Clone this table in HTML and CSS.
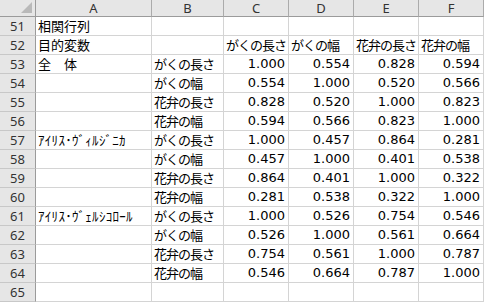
FILE: index.html
```html
<!DOCTYPE html>
<html lang="ja">
<head>
<meta charset="utf-8">
<link rel="stylesheet" href="styles.css">
</head>
<body>
<div class="sheet">
  <div class="corner"><span class="tri"></span></div>
  <div class="ch">A</div><div class="ch">B</div><div class="ch">C</div><div class="ch">D</div><div class="ch">E</div><div class="ch">F</div>

  <div class="rh">51</div><div class="c t">相関行列</div><div class="c"></div><div class="c"></div><div class="c"></div><div class="c"></div><div class="c"></div>
  <div class="rh">52</div><div class="c t">目的変数</div><div class="c"></div><div class="c t k">がくの長さ</div><div class="c t k">がくの幅</div><div class="c t k">花弁の長さ</div><div class="c t k">花弁の幅</div>

  <div class="rh">53</div><div class="c t">全　体</div><div class="c t k">がくの長さ</div><div class="c n">1.000</div><div class="c n">0.554</div><div class="c n">0.828</div><div class="c n">0.594</div>
  <div class="rh">54</div><div class="c"></div><div class="c t k">がくの幅</div><div class="c n">0.554</div><div class="c n">1.000</div><div class="c n">0.520</div><div class="c n">0.566</div>
  <div class="rh">55</div><div class="c"></div><div class="c t k">花弁の長さ</div><div class="c n">0.828</div><div class="c n">0.520</div><div class="c n">1.000</div><div class="c n">0.823</div>
  <div class="rh">56</div><div class="c"></div><div class="c t k">花弁の幅</div><div class="c n">0.594</div><div class="c n">0.566</div><div class="c n">0.823</div><div class="c n">1.000</div>

  <div class="rh">57</div><div class="c t h">ｱｲﾘｽ･ｳﾞｨﾙｼﾞﾆｶ</div><div class="c t k">がくの長さ</div><div class="c n">1.000</div><div class="c n">0.457</div><div class="c n">0.864</div><div class="c n">0.281</div>
  <div class="rh">58</div><div class="c"></div><div class="c t k">がくの幅</div><div class="c n">0.457</div><div class="c n">1.000</div><div class="c n">0.401</div><div class="c n">0.538</div>
  <div class="rh">59</div><div class="c"></div><div class="c t k">花弁の長さ</div><div class="c n">0.864</div><div class="c n">0.401</div><div class="c n">1.000</div><div class="c n">0.322</div>
  <div class="rh">60</div><div class="c"></div><div class="c t k">花弁の幅</div><div class="c n">0.281</div><div class="c n">0.538</div><div class="c n">0.322</div><div class="c n">1.000</div>

  <div class="rh">61</div><div class="c t h">ｱｲﾘｽ･ｳﾞｪﾙｼｺﾛｰﾙ</div><div class="c t k">がくの長さ</div><div class="c n">1.000</div><div class="c n">0.526</div><div class="c n">0.754</div><div class="c n">0.546</div>
  <div class="rh">62</div><div class="c"></div><div class="c t k">がくの幅</div><div class="c n">0.526</div><div class="c n">1.000</div><div class="c n">0.561</div><div class="c n">0.664</div>
  <div class="rh">63</div><div class="c"></div><div class="c t k">花弁の長さ</div><div class="c n">0.754</div><div class="c n">0.561</div><div class="c n">1.000</div><div class="c n">0.787</div>
  <div class="rh">64</div><div class="c"></div><div class="c t k">花弁の幅</div><div class="c n">0.546</div><div class="c n">0.664</div><div class="c n">0.787</div><div class="c n">1.000</div>

  <div class="rh">65</div><div class="c"></div><div class="c"></div><div class="c"></div><div class="c"></div><div class="c"></div><div class="c"></div>
</div>
</body>
</html>
```

FILE: styles.css
```css
html, body {
  margin: 0;
  padding: 0;
  background: #ffffff;
}

.sheet {
  display: grid;
  grid-template-columns: 36px 116px 72px 65px 65px 65px 65px;
  grid-template-rows: 17px repeat(15, 19px);
  width: 484px;
}

.corner {
  position: relative;
  background: #e6e6e6;
  border-right: 1px solid #9b9b9b;
  border-bottom: 1px solid #9b9b9b;
  box-sizing: border-box;
}

.tri {
  position: absolute;
  right: 3px;
  bottom: 3px;
  width: 0;
  height: 0;
  border-left: 11px solid transparent;
  border-bottom: 11px solid #b9b9b9;
}

.ch {
  background: #e6e6e6;
  border-right: 1px solid #ababab;
  border-bottom: 1px solid #9b9b9b;
  box-sizing: border-box;
  font-family: "Noto Sans", "DejaVu Sans", sans-serif;
  font-size: 13px;
  line-height: 16px;
  color: #333333;
  text-align: center;
}

.rh {
  background: #e6e6e6;
  border-right: 1px solid #9b9b9b;
  border-bottom: 1px solid #c8c8c8;
  box-sizing: border-box;
  font-family: "Noto Sans", "DejaVu Sans", sans-serif;
  font-size: 13px;
  line-height: 18px;
  color: #333333;
  text-align: center;
}

.c {
  border-right: 1px solid #d4d4d4;
  border-bottom: 1px solid #d4d4d4;
  box-sizing: border-box;
  line-height: 18px;
  color: #000000;
  white-space: nowrap;
  overflow: hidden;
}

.t {
  font-family: "Noto Sans CJK JP", sans-serif;
  font-size: 13px;
  padding-left: 2px;
}

.k {
  letter-spacing: -1px;
}

.h {
  letter-spacing: 0.3px;
}

.n {
  font-family: "DejaVu Sans", sans-serif;
  font-size: 13px;
  text-align: right;
  padding-right: 3px;
}
```
